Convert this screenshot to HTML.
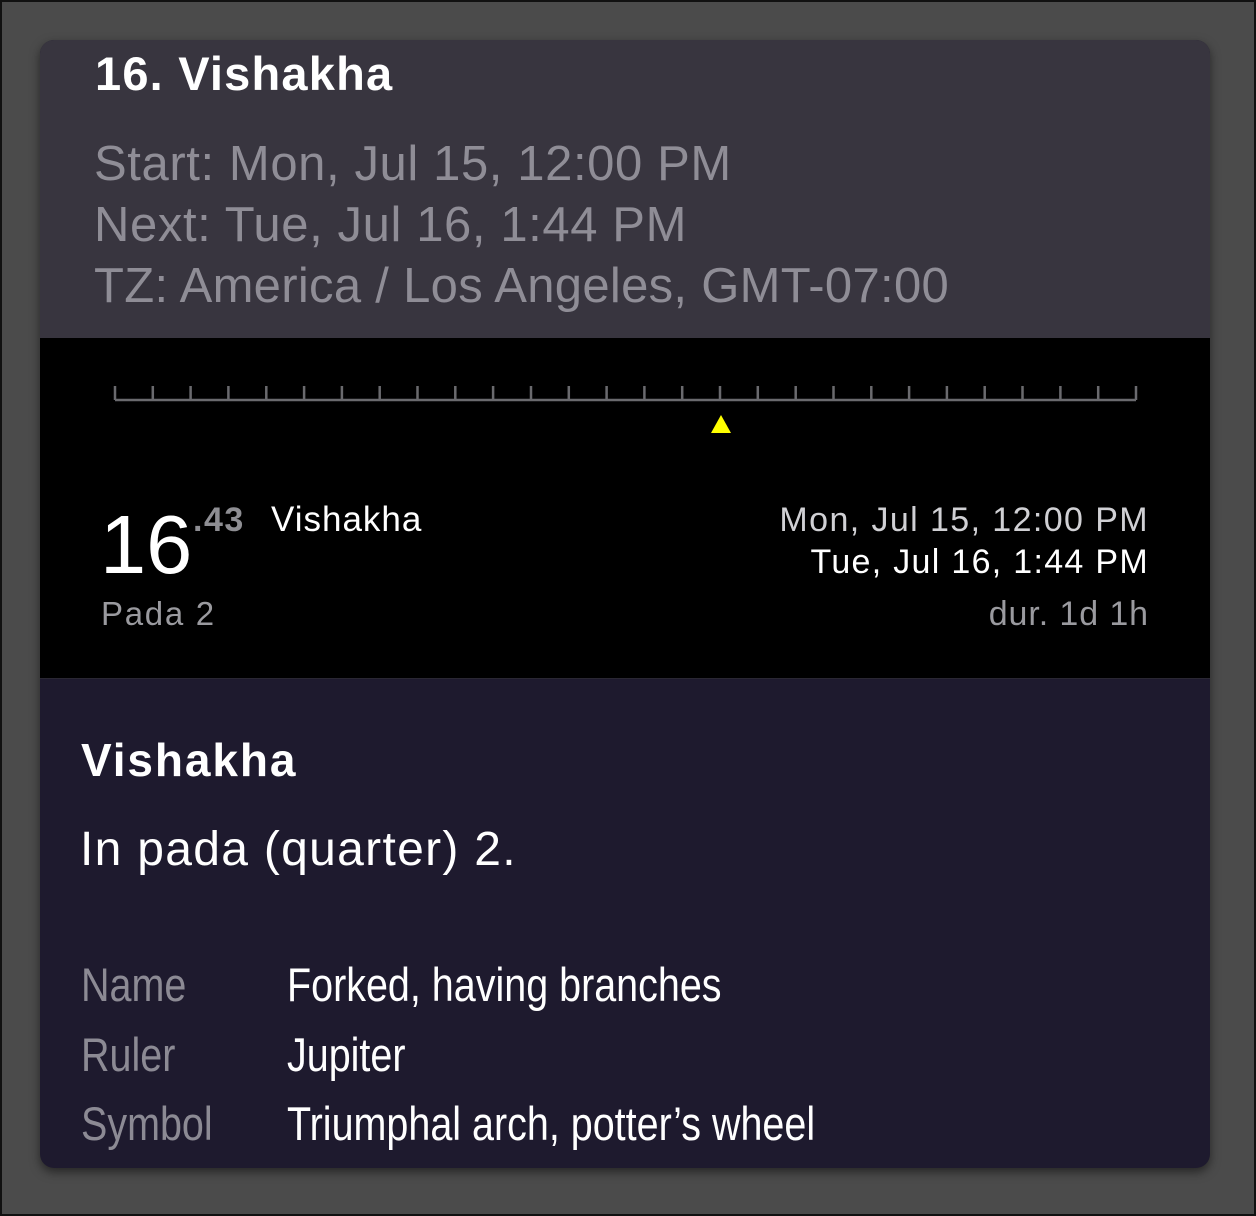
<!DOCTYPE html>
<html><head><meta charset="utf-8"><style>
html,body{margin:0;padding:0}
body{width:1256px;height:1216px;background:#4b4b4b;position:relative;overflow:hidden;font-family:"Liberation Sans",sans-serif;box-shadow:inset 0 0 0 2px #111}
.card{position:absolute;left:40px;top:40px;width:1170px;height:1128px;border-radius:14px;overflow:hidden;background:#1e1a2e;box-shadow:0 4px 10px rgba(0,0,0,.5)}
.top{position:absolute;left:0;top:0;width:100%;height:298px;background:#38353f}
.blk{position:absolute;left:0;top:298px;width:100%;height:340px;background:#000;border-bottom:1px solid #2a2733}
.t{position:absolute;white-space:nowrap;line-height:1}
.c{transform:scaleX(0.84);transform-origin:0 0}
</style></head><body>
<div class="card">
<div class="top"></div>
<div class="blk"></div>
</div>
<div class="t" style="left:95px;top:50px;font-size:47px;font-weight:bold;color:#fff;letter-spacing:1.2px">16. Vishakha</div>
<div class="t" style="left:94px;top:140px;font-size:49px;color:#8f8d96;letter-spacing:0.6px">Start: Mon, Jul 15, 12:00 PM</div>
<div class="t" style="left:94px;top:201px;font-size:49px;color:#8f8d96;letter-spacing:0.6px">Next: Tue, Jul 16, 1:44 PM</div>
<div class="t" style="left:94px;top:262px;font-size:49px;color:#8f8d96;letter-spacing:0.3px">TZ: America / Los Angeles, GMT-07:00</div>
<svg style="position:absolute;left:0;top:0" width="1256" height="1216">
<g stroke="#6a6a6e" stroke-width="2.5" fill="none">
<line x1="115" y1="400" x2="1136" y2="400"/>
<path d="M115 386V400M152.8 386V400M190.6 386V400M228.4 386V400M266.3 386V400M304.1 386V400M341.9 386V400M379.7 386V400M417.5 386V400M455.3 386V400M493.1 386V400M531 386V400M568.8 386V400M606.6 386V400M644.4 386V400M682.2 386V400M720 386V400M757.8 386V400M795.7 386V400M833.5 386V400M871.3 386V400M909.1 386V400M946.9 386V400M984.7 386V400M1022.5 386V400M1060.4 386V400M1098.2 386V400M1136 386V400"/>
</g>
<polygon points="721,415 731,433 711,433" fill="#ffff00"/>
</svg>
<div class="t" style="left:100px;top:503px;font-size:83px;color:#fff">16</div>
<div class="t" style="left:193px;top:503px;font-size:34px;font-weight:bold;color:#8e8e93;letter-spacing:1.5px">.43</div>
<div class="t" style="left:271px;top:502px;font-size:35px;color:#fff;letter-spacing:1px">Vishakha</div>
<div class="t" style="left:101px;top:597px;font-size:33px;color:#9a9a9f;letter-spacing:1.7px">Pada 2</div>
<div class="t" style="right:107px;top:503px;font-size:34px;color:#d0d0d4;letter-spacing:1.4px">Mon, Jul 15, 12:00 PM</div>
<div class="t" style="right:107px;top:545px;font-size:34px;color:#fff;letter-spacing:1.3px">Tue, Jul 16, 1:44 PM</div>
<div class="t" style="right:107px;top:597px;font-size:34px;color:#9a9a9f;letter-spacing:0.9px">dur. 1d 1h</div>
<div class="t" style="left:81px;top:737px;font-size:46px;font-weight:bold;color:#fff;letter-spacing:1.9px">Vishakha</div>
<div class="t" style="left:80px;top:826px;font-size:48px;color:#fff;letter-spacing:1.3px">In pada (quarter) 2.</div>
<div class="t c" style="left:81px;top:961px;font-size:47px;color:#8c8a94">Name</div>
<div class="t c" style="left:81px;top:1031px;font-size:47px;color:#8c8a94">Ruler</div>
<div class="t c" style="left:81px;top:1100px;font-size:47px;color:#8c8a94">Symbol</div>
<div class="t c" style="left:287px;top:961px;font-size:47px;color:#fff">Forked, having branches</div>
<div class="t c" style="left:287px;top:1031px;font-size:47px;color:#fff">Jupiter</div>
<div class="t c" style="left:287px;top:1100px;font-size:47px;color:#fff">Triumphal arch, potter’s wheel</div>
</body></html>
